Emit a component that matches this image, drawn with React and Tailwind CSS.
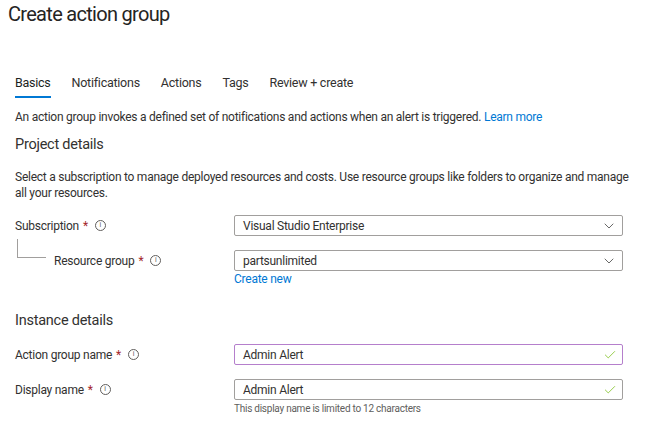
import { ChevronDown, Check } from 'lucide-react'

const font = { fontFamily: 'Roboto, "Noto Sans", sans-serif' }

const TABS = ['Basics', 'Notifications', 'Actions', 'Tags', 'Review + create']

function Info() {
  return (
    <span className="inline-flex items-center justify-center w-[11px] h-[11px] rounded-full border border-[#605e5c] text-[7px] leading-none text-[#605e5c] ml-[7px] tracking-normal">i</span>
  )
}

function Label({ children }) {
  return (
    <span className="flex items-center text-[12px] text-[#323130]">
      {children}
      <span className="text-[#a4262c] ml-[4px]">*</span>
      <Info />
    </span>
  )
}

function Field({ value, focused, icon }) {
  return (
    <div className={`h-[21px] w-[389px] flex items-center justify-between pl-[8px] pr-[5px] border rounded-[2px] bg-white ${focused ? 'border-[#b57fcc] border-[1.5px]' : 'border-[#a19f9d]'}`}>
      <span className="text-[12px] text-[#323130]">{value}</span>
      {icon === 'chevron' ? (
        <ChevronDown size={16} strokeWidth={1.1} className="text-[#323130]" />
      ) : (
        <Check size={14} strokeWidth={1.2} className="text-[#6bb700]" />
      )}
    </div>
  )
}

export default function App() {
  return (
    <div className="w-[656px] h-[434px] bg-white overflow-hidden tracking-[-0.25px]" style={font}>
      <h1 className="pl-[8px] text-[20px] leading-[28px] tracking-[-0.7px] text-[#252423]">Create action group</h1>

      <nav className="flex gap-[21px] pl-[15px] mt-[45px]">
        {TABS.map((t, i) => (
          <div key={t} className="flex flex-col">
            <span className={`text-[12.5px] leading-[20px] ${i === 0 ? 'text-[#201f1e]' : 'text-[#323130]'}`}>{t}</span>
            <span className={`h-[2px] mt-[3px] ${i === 0 ? 'bg-[#0078d4]' : 'bg-transparent'}`} />
          </div>
        ))}
      </nav>

      <div className="px-[15px]">
        <p className="mt-[11px] text-[12px] leading-[16px] text-[#323130]">
          An action group invokes a defined set of notifications and actions when an alert is triggered. <span className="text-[#0078d4]">Learn more</span>
        </p>

        <h2 className="mt-[10px] text-[14.5px] leading-[20px] text-[#323130]">Project details</h2>

        <p className="mt-[14px] text-[12px] leading-[16px] text-[#323130] w-[622px]">
          Select a subscription to manage deployed resources and costs. Use resource groups like folders to organize and manage all your resources.
        </p>

        <div className="mt-[14px] flex items-center">
          <div className="w-[219px]"><Label>Subscription</Label></div>
          <Field value="Visual Studio Enterprise" icon="chevron" />
        </div>

        <div className="mt-[14px] flex">
          <div className="w-[219px] flex items-start">
            <div className="w-[29px] h-[19px] ml-[2px] -mt-[11px] border-l border-b border-[#a19f9d]" />
            <div className="ml-[8px] h-[21px] flex items-center"><Label>Resource group</Label></div>
          </div>
          <div className="flex flex-col">
            <Field value="partsunlimited" icon="chevron" />
            <span className="text-[12px] leading-[16px] text-[#0078d4]">Create new</span>
          </div>
        </div>

        <h2 className="mt-[24px] text-[14.5px] leading-[20px] text-[#323130]">Instance details</h2>

        <div className="mt-[13px] flex items-center">
          <div className="w-[219px]"><Label>Action group name</Label></div>
          <Field value="Admin Alert" focused icon="check" />
        </div>

        <div className="mt-[14px] flex">
          <div className="w-[219px] h-[21px] flex items-center"><Label>Display name</Label></div>
          <div className="flex flex-col">
            <Field value="Admin Alert" icon="check" />
            <span className="mt-[2px] text-[10px] leading-[14px] text-[#605e5c]">This display name is limited to 12 characters</span>
          </div>
        </div>
      </div>
    </div>
  )
}
